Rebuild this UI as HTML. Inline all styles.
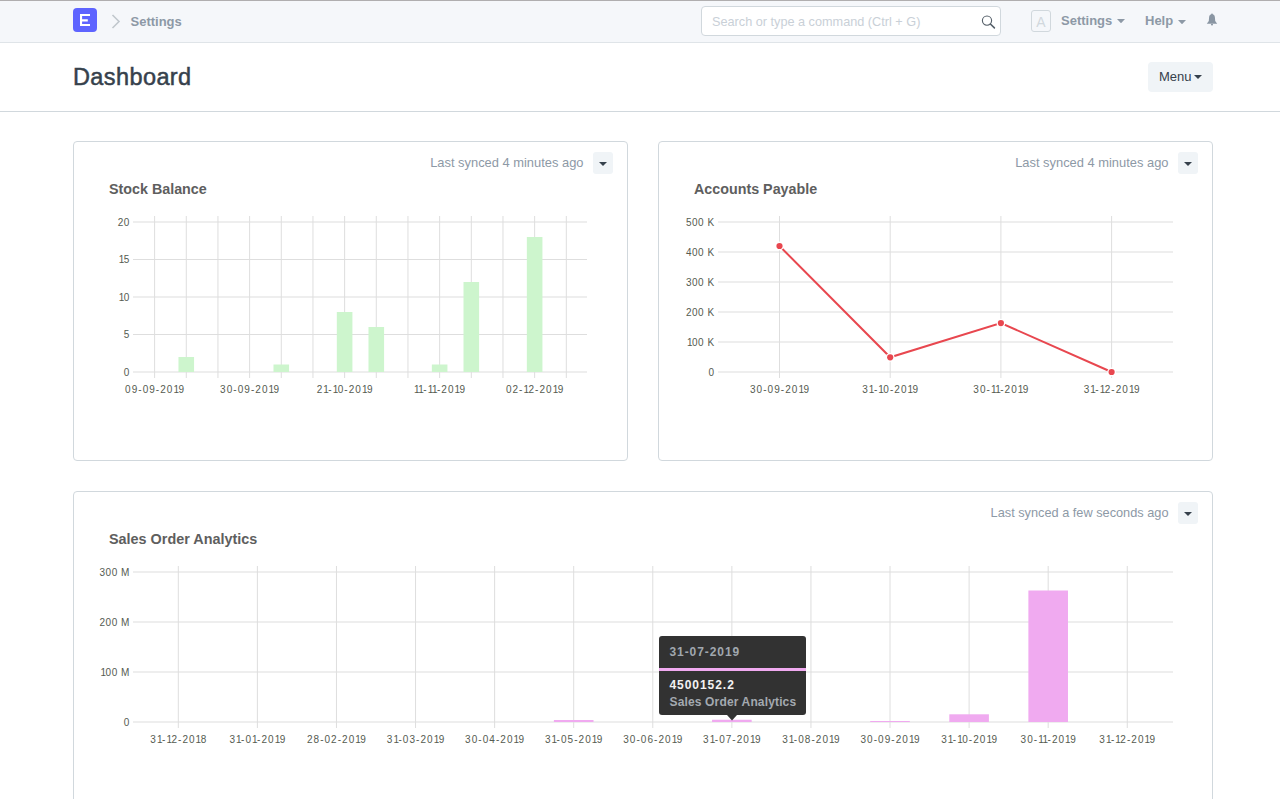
<!DOCTYPE html>
<html><head><meta charset="utf-8"><title>Dashboard</title>
<style>
html,body{margin:0;padding:0;width:1280px;height:799px;overflow:hidden;background:#fff;font-family:"Liberation Sans", sans-serif;position:relative}
div{box-sizing:content-box}
</style></head><body>
<div style="position:absolute;left:0;top:0;width:1280px;height:42px;background:#f5f7fa;border-bottom:1px solid #dfe4e8"></div>
<svg style="position:absolute;left:0;top:0" width="1280" height="799"><rect x="133" y="221.50" width="454" height="1" fill="#dedede"/><rect x="133" y="259.00" width="454" height="1" fill="#dedede"/><rect x="133" y="296.50" width="454" height="1" fill="#dedede"/><rect x="133" y="334.00" width="454" height="1" fill="#dedede"/><rect x="133" y="371.50" width="454" height="1" fill="#dedede"/><rect x="154.10" y="216" width="1" height="162" fill="#dedede"/><rect x="185.77" y="216" width="1" height="162" fill="#dedede"/><rect x="217.44" y="216" width="1" height="162" fill="#dedede"/><rect x="249.11" y="216" width="1" height="162" fill="#dedede"/><rect x="280.78" y="216" width="1" height="162" fill="#dedede"/><rect x="312.45" y="216" width="1" height="162" fill="#dedede"/><rect x="344.12" y="216" width="1" height="162" fill="#dedede"/><rect x="375.79" y="216" width="1" height="162" fill="#dedede"/><rect x="407.46" y="216" width="1" height="162" fill="#dedede"/><rect x="439.13" y="216" width="1" height="162" fill="#dedede"/><rect x="470.80" y="216" width="1" height="162" fill="#dedede"/><rect x="502.47" y="216" width="1" height="162" fill="#dedede"/><rect x="534.14" y="216" width="1" height="162" fill="#dedede"/><rect x="565.81" y="216" width="1" height="162" fill="#dedede"/><rect x="178.47" y="357.00" width="15.6" height="15.0" fill="#cdf5cd"/><rect x="273.48" y="364.50" width="15.6" height="7.5" fill="#cdf5cd"/><rect x="336.82" y="312.00" width="15.6" height="60.0" fill="#cdf5cd"/><rect x="368.49" y="327.00" width="15.6" height="45.0" fill="#cdf5cd"/><rect x="431.83" y="364.50" width="15.6" height="7.5" fill="#cdf5cd"/><rect x="463.50" y="282.00" width="15.6" height="90.0" fill="#cdf5cd"/><rect x="526.84" y="237.00" width="15.6" height="135.0" fill="#cdf5cd"/><rect x="718" y="221.50" width="455" height="1" fill="#dedede"/><rect x="718" y="251.50" width="455" height="1" fill="#dedede"/><rect x="718" y="281.50" width="455" height="1" fill="#dedede"/><rect x="718" y="311.50" width="455" height="1" fill="#dedede"/><rect x="718" y="341.50" width="455" height="1" fill="#dedede"/><rect x="718" y="371.50" width="455" height="1" fill="#dedede"/><rect x="779.00" y="216" width="1" height="162" fill="#dedede"/><rect x="889.70" y="216" width="1" height="162" fill="#dedede"/><rect x="1000.40" y="216" width="1" height="162" fill="#dedede"/><rect x="1111.10" y="216" width="1" height="162" fill="#dedede"/><polyline points="779.5,246 890.2,357.3 1000.9,323.1 1111.6,372" fill="none" stroke="#e8474f" stroke-width="2"/><circle cx="779.5" cy="246" r="4.4" fill="#fff"/><circle cx="779.5" cy="246" r="3.1" fill="#e8474f"/><circle cx="890.2" cy="357.3" r="4.4" fill="#fff"/><circle cx="890.2" cy="357.3" r="3.1" fill="#e8474f"/><circle cx="1000.9" cy="323.1" r="4.4" fill="#fff"/><circle cx="1000.9" cy="323.1" r="3.1" fill="#e8474f"/><circle cx="1111.6" cy="372" r="4.4" fill="#fff"/><circle cx="1111.6" cy="372" r="3.1" fill="#e8474f"/><rect x="133" y="571.50" width="1040" height="1" fill="#dedede"/><rect x="133" y="621.50" width="1040" height="1" fill="#dedede"/><rect x="133" y="671.50" width="1040" height="1" fill="#dedede"/><rect x="133" y="721.50" width="1040" height="1" fill="#dedede"/><rect x="177.80" y="566" width="1" height="162" fill="#dedede"/><rect x="256.88" y="566" width="1" height="162" fill="#dedede"/><rect x="335.96" y="566" width="1" height="162" fill="#dedede"/><rect x="415.04" y="566" width="1" height="162" fill="#dedede"/><rect x="494.12" y="566" width="1" height="162" fill="#dedede"/><rect x="573.20" y="566" width="1" height="162" fill="#dedede"/><rect x="652.28" y="566" width="1" height="162" fill="#dedede"/><rect x="731.36" y="566" width="1" height="162" fill="#dedede"/><rect x="810.44" y="566" width="1" height="162" fill="#dedede"/><rect x="889.52" y="566" width="1" height="162" fill="#dedede"/><rect x="968.60" y="566" width="1" height="162" fill="#dedede"/><rect x="1047.68" y="566" width="1" height="162" fill="#dedede"/><rect x="1126.76" y="566" width="1" height="162" fill="#dedede"/><rect x="553.90" y="720.00" width="39.6" height="2" fill="#f0aaf0"/><rect x="712.06" y="719.75" width="39.6" height="2.25" fill="#f0aaf0"/><rect x="870.22" y="721.00" width="39.6" height="1" fill="#f0aaf0"/><rect x="949.30" y="714.30" width="39.6" height="7.7" fill="#f0aaf0"/><rect x="1028.38" y="590.50" width="39.6" height="131.5" fill="#f0aaf0"/></svg>
<div style="position:absolute;left:0;top:0;width:1280px;height:1px;background:#b0aeaf"></div><svg style="position:absolute;left:73px;top:8px" width="24" height="24"><rect width="24" height="24" rx="4" fill="#5e64ff"/><path d="M7 6H17V8.05H9.1V11.3H14.8V13.4H9.1V15.95H17V18H7Z" fill="#fff"/></svg><svg style="position:absolute;left:110px;top:13px" width="14" height="18"><path d="M2.5 2L9 8.5L2.5 15" fill="none" stroke="#c0c7cd" stroke-width="1.6"/></svg><div style="position:absolute;left:130.5px;top:15.00px;font-size:13px;line-height:13px;color:#8d99a6;font-weight:700;white-space:nowrap;">Settings</div><div style="position:absolute;left:701px;top:6px;width:298px;height:28px;background:#fff;border:1px solid #d1d8dd;border-radius:4px"></div><div style="position:absolute;left:712px;top:16.25px;font-size:12.7px;line-height:12.7px;color:#c9d0d7;font-weight:400;white-space:nowrap;">Search or type a command (Ctrl + G)</div><svg style="position:absolute;left:979px;top:14px" width="18" height="18"><circle cx="8" cy="6.6" r="4.6" fill="none" stroke="#56606a" stroke-width="1.15"/><path d="M11.4 10L15.4 13.9" stroke="#56606a" stroke-width="1.6" stroke-linecap="round"/></svg><div style="position:absolute;left:1031px;top:10px;width:18px;height:20px;border:1px solid #d1d8dd;border-radius:3px;color:#d1d8dd;font-size:14px;line-height:22px;text-align:center">A</div><div style="position:absolute;left:1061px;top:14.00px;font-size:13px;line-height:13px;color:#8d99a6;font-weight:700;white-space:nowrap;">Settings</div><svg style="position:absolute;left:1117px;top:19px" width="8" height="4.3"><path d="M0 0H8L4.0 4.3Z" fill="#8d99a6"/></svg><div style="position:absolute;left:1145px;top:14.00px;font-size:13px;line-height:13px;color:#8d99a6;font-weight:700;white-space:nowrap;">Help</div><svg style="position:absolute;left:1178px;top:19.5px" width="8" height="4.3"><path d="M0 0H8L4.0 4.3Z" fill="#8d99a6"/></svg><svg style="position:absolute;left:1205px;top:12.7px" width="14" height="14"><path d="M7 1.3C5.3 1.3 4.2 2.4 4.1 4.3L3.8 8.1L1.8 10.7H12.2L10.2 8.1L9.9 4.3C9.8 2.4 8.7 1.3 7 1.3Z M5.7 10.5H8.3L7.7 12.2Q7 12.9 6.3 12.2Z" fill="#8a96a3"/><circle cx="7" cy="1.4" r="0.9" fill="#8a96a3"/></svg><div style="position:absolute;left:73px;top:66.11px;font-size:23.5px;line-height:23.5px;color:#36414c;font-weight:400;white-space:nowrap;-webkit-text-stroke:0.5px #36414c;letter-spacing:0.4px">Dashboard</div><div style="position:absolute;left:1148px;top:62px;width:65px;height:30px;background:#f0f4f7;border-radius:4px"></div><div style="position:absolute;left:1159px;top:70.00px;font-size:13px;line-height:13px;color:#36414c;font-weight:400;white-space:nowrap;">Menu</div><svg style="position:absolute;left:1194px;top:75px" width="8" height="4"><path d="M0 0H8L4.0 4Z" fill="#36414c"/></svg><div style="position:absolute;left:0;top:111px;width:1280px;height:1px;background:#d1d8dd"></div><div style="position:absolute;left:73px;top:141px;width:553px;height:318px;border:1px solid #d1d8dd;border-radius:4px"></div><div style="position:absolute;right:696.5px;top:156.68px;font-size:12.9px;line-height:12.9px;color:#8d99a6;font-weight:400;white-space:nowrap;text-align:right;">Last synced 4 minutes ago</div><div style="position:absolute;left:593px;top:152px;width:20px;height:22px;background:#f0f4f7;border-radius:3px"></div><svg style="position:absolute;left:599px;top:162px" width="8" height="4"><path d="M0 0H8L4.0 4Z" fill="#36414c"/></svg><div style="position:absolute;left:109px;top:181.70px;font-size:14.3px;line-height:14.3px;color:#5e5e5e;font-weight:700;white-space:nowrap;">Stock Balance</div><div style="position:absolute;left:658px;top:141px;width:553px;height:318px;border:1px solid #d1d8dd;border-radius:4px"></div><div style="position:absolute;right:111.5px;top:156.68px;font-size:12.9px;line-height:12.9px;color:#8d99a6;font-weight:400;white-space:nowrap;text-align:right;">Last synced 4 minutes ago</div><div style="position:absolute;left:1178px;top:152px;width:20px;height:22px;background:#f0f4f7;border-radius:3px"></div><svg style="position:absolute;left:1184px;top:162px" width="8" height="4"><path d="M0 0H8L4.0 4Z" fill="#36414c"/></svg><div style="position:absolute;left:694px;top:181.70px;font-size:14.3px;line-height:14.3px;color:#5e5e5e;font-weight:700;white-space:nowrap;">Accounts Payable</div><div style="position:absolute;left:73px;top:491px;width:1138px;height:400px;border:1px solid #d1d8dd;border-radius:4px"></div><div style="position:absolute;right:111.5px;top:506.61px;font-size:12.75px;line-height:12.75px;color:#8d99a6;font-weight:400;white-space:nowrap;text-align:right;">Last synced a few seconds ago</div><div style="position:absolute;left:1178px;top:502px;width:20px;height:22px;background:#f0f4f7;border-radius:3px"></div><svg style="position:absolute;left:1184px;top:512px" width="8" height="4"><path d="M0 0H8L4.0 4Z" fill="#36414c"/></svg><div style="position:absolute;left:109px;top:531.61px;font-size:14.4px;line-height:14.4px;color:#5e5e5e;font-weight:700;white-space:nowrap;">Sales Order Analytics</div><div style="position:absolute;right:1150.2px;top:217.73px;font-size:10px;line-height:10px;color:#555b51;font-weight:400;white-space:nowrap;text-align:right;letter-spacing:0.5px">20</div><div style="position:absolute;right:1150.2px;top:255.23px;font-size:10px;line-height:10px;color:#555b51;font-weight:400;white-space:nowrap;text-align:right;letter-spacing:0.5px"><span style="letter-spacing:-0.55px">1</span>5</div><div style="position:absolute;right:1150.2px;top:292.74px;font-size:10px;line-height:10px;color:#555b51;font-weight:400;white-space:nowrap;text-align:right;letter-spacing:0.5px"><span style="letter-spacing:-0.55px">1</span>0</div><div style="position:absolute;right:1150.2px;top:330.24px;font-size:10px;line-height:10px;color:#555b51;font-weight:400;white-space:nowrap;text-align:right;letter-spacing:0.5px">5</div><div style="position:absolute;right:1150.2px;top:367.74px;font-size:10px;line-height:10px;color:#555b51;font-weight:400;white-space:nowrap;text-align:right;letter-spacing:0.5px">0</div><div style="position:absolute;left:105.10px;width:100px;text-align:center;top:384.54px;font-size:10px;line-height:10px;color:#555b51;letter-spacing:1.05px;white-space:nowrap">09-09-20<span style="letter-spacing:-0.55px">1</span>9</div><div style="position:absolute;left:200.11px;width:100px;text-align:center;top:384.54px;font-size:10px;line-height:10px;color:#555b51;letter-spacing:1.05px;white-space:nowrap">30-09-20<span style="letter-spacing:-0.55px">1</span>9</div><div style="position:absolute;left:295.12px;width:100px;text-align:center;top:384.54px;font-size:10px;line-height:10px;color:#555b51;letter-spacing:1.05px;white-space:nowrap">2<span style="letter-spacing:-0.55px">1</span>-<span style="letter-spacing:-0.55px">1</span>0-20<span style="letter-spacing:-0.55px">1</span>9</div><div style="position:absolute;left:390.13px;width:100px;text-align:center;top:384.54px;font-size:10px;line-height:10px;color:#555b51;letter-spacing:1.05px;white-space:nowrap"><span style="letter-spacing:-0.55px">1</span><span style="letter-spacing:-0.55px">1</span>-<span style="letter-spacing:-0.55px">1</span><span style="letter-spacing:-0.55px">1</span>-20<span style="letter-spacing:-0.55px">1</span>9</div><div style="position:absolute;left:485.14px;width:100px;text-align:center;top:384.54px;font-size:10px;line-height:10px;color:#555b51;letter-spacing:1.05px;white-space:nowrap">02-<span style="letter-spacing:-0.55px">1</span>2-20<span style="letter-spacing:-0.55px">1</span>9</div><div style="position:absolute;right:565.4px;top:217.73px;font-size:10px;line-height:10px;color:#555b51;font-weight:400;white-space:nowrap;text-align:right;letter-spacing:0.5px">500 K</div><div style="position:absolute;right:565.4px;top:247.73px;font-size:10px;line-height:10px;color:#555b51;font-weight:400;white-space:nowrap;text-align:right;letter-spacing:0.5px">400 K</div><div style="position:absolute;right:565.4px;top:277.74px;font-size:10px;line-height:10px;color:#555b51;font-weight:400;white-space:nowrap;text-align:right;letter-spacing:0.5px">300 K</div><div style="position:absolute;right:565.4px;top:307.74px;font-size:10px;line-height:10px;color:#555b51;font-weight:400;white-space:nowrap;text-align:right;letter-spacing:0.5px">200 K</div><div style="position:absolute;right:565.4px;top:337.74px;font-size:10px;line-height:10px;color:#555b51;font-weight:400;white-space:nowrap;text-align:right;letter-spacing:0.5px"><span style="letter-spacing:-0.55px">1</span>00 K</div><div style="position:absolute;right:565.4px;top:367.74px;font-size:10px;line-height:10px;color:#555b51;font-weight:400;white-space:nowrap;text-align:right;letter-spacing:0.5px">0</div><div style="position:absolute;left:730.00px;width:100px;text-align:center;top:384.54px;font-size:10px;line-height:10px;color:#555b51;letter-spacing:1.05px;white-space:nowrap">30-09-20<span style="letter-spacing:-0.55px">1</span>9</div><div style="position:absolute;left:840.70px;width:100px;text-align:center;top:384.54px;font-size:10px;line-height:10px;color:#555b51;letter-spacing:1.05px;white-space:nowrap">3<span style="letter-spacing:-0.55px">1</span>-<span style="letter-spacing:-0.55px">1</span>0-20<span style="letter-spacing:-0.55px">1</span>9</div><div style="position:absolute;left:951.40px;width:100px;text-align:center;top:384.54px;font-size:10px;line-height:10px;color:#555b51;letter-spacing:1.05px;white-space:nowrap">30-<span style="letter-spacing:-0.55px">1</span><span style="letter-spacing:-0.55px">1</span>-20<span style="letter-spacing:-0.55px">1</span>9</div><div style="position:absolute;left:1062.10px;width:100px;text-align:center;top:384.54px;font-size:10px;line-height:10px;color:#555b51;letter-spacing:1.05px;white-space:nowrap">3<span style="letter-spacing:-0.55px">1</span>-<span style="letter-spacing:-0.55px">1</span>2-20<span style="letter-spacing:-0.55px">1</span>9</div><div style="position:absolute;right:1150.2px;top:567.74px;font-size:10px;line-height:10px;color:#555b51;font-weight:400;white-space:nowrap;text-align:right;letter-spacing:0.5px">300 M</div><div style="position:absolute;right:1150.2px;top:617.74px;font-size:10px;line-height:10px;color:#555b51;font-weight:400;white-space:nowrap;text-align:right;letter-spacing:0.5px">200 M</div><div style="position:absolute;right:1150.2px;top:667.74px;font-size:10px;line-height:10px;color:#555b51;font-weight:400;white-space:nowrap;text-align:right;letter-spacing:0.5px"><span style="letter-spacing:-0.55px">1</span>00 M</div><div style="position:absolute;right:1150.2px;top:717.74px;font-size:10px;line-height:10px;color:#555b51;font-weight:400;white-space:nowrap;text-align:right;letter-spacing:0.5px">0</div><div style="position:absolute;left:128.80px;width:100px;text-align:center;top:734.53px;font-size:10px;line-height:10px;color:#555b51;letter-spacing:1.05px;white-space:nowrap">3<span style="letter-spacing:-0.55px">1</span>-<span style="letter-spacing:-0.55px">1</span>2-20<span style="letter-spacing:-0.55px">1</span>8</div><div style="position:absolute;left:207.88px;width:100px;text-align:center;top:734.53px;font-size:10px;line-height:10px;color:#555b51;letter-spacing:1.05px;white-space:nowrap">3<span style="letter-spacing:-0.55px">1</span>-0<span style="letter-spacing:-0.55px">1</span>-20<span style="letter-spacing:-0.55px">1</span>9</div><div style="position:absolute;left:286.96px;width:100px;text-align:center;top:734.53px;font-size:10px;line-height:10px;color:#555b51;letter-spacing:1.05px;white-space:nowrap">28-02-20<span style="letter-spacing:-0.55px">1</span>9</div><div style="position:absolute;left:366.04px;width:100px;text-align:center;top:734.53px;font-size:10px;line-height:10px;color:#555b51;letter-spacing:1.05px;white-space:nowrap">3<span style="letter-spacing:-0.55px">1</span>-03-20<span style="letter-spacing:-0.55px">1</span>9</div><div style="position:absolute;left:445.12px;width:100px;text-align:center;top:734.53px;font-size:10px;line-height:10px;color:#555b51;letter-spacing:1.05px;white-space:nowrap">30-04-20<span style="letter-spacing:-0.55px">1</span>9</div><div style="position:absolute;left:524.20px;width:100px;text-align:center;top:734.53px;font-size:10px;line-height:10px;color:#555b51;letter-spacing:1.05px;white-space:nowrap">3<span style="letter-spacing:-0.55px">1</span>-05-20<span style="letter-spacing:-0.55px">1</span>9</div><div style="position:absolute;left:603.28px;width:100px;text-align:center;top:734.53px;font-size:10px;line-height:10px;color:#555b51;letter-spacing:1.05px;white-space:nowrap">30-06-20<span style="letter-spacing:-0.55px">1</span>9</div><div style="position:absolute;left:682.36px;width:100px;text-align:center;top:734.53px;font-size:10px;line-height:10px;color:#555b51;letter-spacing:1.05px;white-space:nowrap">3<span style="letter-spacing:-0.55px">1</span>-07-20<span style="letter-spacing:-0.55px">1</span>9</div><div style="position:absolute;left:761.44px;width:100px;text-align:center;top:734.53px;font-size:10px;line-height:10px;color:#555b51;letter-spacing:1.05px;white-space:nowrap">3<span style="letter-spacing:-0.55px">1</span>-08-20<span style="letter-spacing:-0.55px">1</span>9</div><div style="position:absolute;left:840.52px;width:100px;text-align:center;top:734.53px;font-size:10px;line-height:10px;color:#555b51;letter-spacing:1.05px;white-space:nowrap">30-09-20<span style="letter-spacing:-0.55px">1</span>9</div><div style="position:absolute;left:919.60px;width:100px;text-align:center;top:734.53px;font-size:10px;line-height:10px;color:#555b51;letter-spacing:1.05px;white-space:nowrap">3<span style="letter-spacing:-0.55px">1</span>-<span style="letter-spacing:-0.55px">1</span>0-20<span style="letter-spacing:-0.55px">1</span>9</div><div style="position:absolute;left:998.68px;width:100px;text-align:center;top:734.53px;font-size:10px;line-height:10px;color:#555b51;letter-spacing:1.05px;white-space:nowrap">30-<span style="letter-spacing:-0.55px">1</span><span style="letter-spacing:-0.55px">1</span>-20<span style="letter-spacing:-0.55px">1</span>9</div><div style="position:absolute;left:1077.76px;width:100px;text-align:center;top:734.53px;font-size:10px;line-height:10px;color:#555b51;letter-spacing:1.05px;white-space:nowrap">3<span style="letter-spacing:-0.55px">1</span>-<span style="letter-spacing:-0.55px">1</span>2-20<span style="letter-spacing:-0.55px">1</span>9</div>
<div style="position:absolute;left:659px;top:636px;width:147px;height:79px;background:rgba(45,45,45,0.975);border-radius:3px"></div><div style="position:absolute;left:659px;top:668px;width:147px;height:3px;background:#f0aaf0"></div><svg style="position:absolute;left:727px;top:714.5px" width="10" height="6"><path d="M0 0H10L5 5.5Z" fill="rgba(45,45,45,0.975)"/></svg><div style="position:absolute;left:669.5px;top:646.34px;font-size:12px;line-height:12px;color:#a0a7ae;font-weight:700;white-space:nowrap;letter-spacing:0.92px">31-07-2019</div><div style="position:absolute;left:669.5px;top:679.34px;font-size:12px;line-height:12px;color:#f2f2f2;font-weight:700;white-space:nowrap;letter-spacing:0.95px">4500152.2</div><div style="position:absolute;left:669.5px;top:695.84px;font-size:12px;line-height:12px;color:#a3a9b0;font-weight:700;white-space:nowrap;letter-spacing:0.15px">Sales Order Analytics</div>
</body></html>
